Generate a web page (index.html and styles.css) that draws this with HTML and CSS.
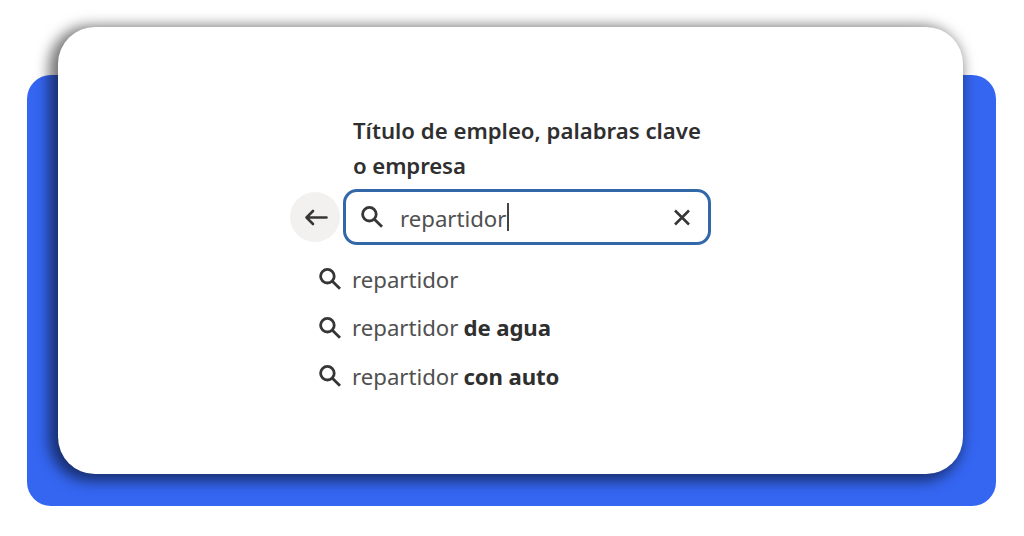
FILE: index.html
```html
<!DOCTYPE html>
<html lang="es">
<head>
  <meta charset="UTF-8">
  <meta name="viewport" content="width=device-width, initial-scale=1.0">
  <title>Buscar empleo</title>
  <link rel="stylesheet" href="styles.css">
</head>

<body>
  <svg class="sprite">
    <symbol id="icon-search" viewBox="0 0 22 22">
      <circle cx="8.4" cy="8.2" r="6.8"/>
      <path d="M13.1 13L21 20.8"/>
    </symbol>
  </svg>

  <div class="frame">
    <div class="card">
      <form class="search">
        <label class="search-label">
          <span>Título de empleo, palabras clave</span><br>
          <span class="label-end">o empresa</span>
        </label>

        <div class="search-row">
          <button class="button-back" type="button" aria-label="Volver">
            <svg class="icon-back" viewBox="0 0 24 18"><path d="M22.5 9.5H2.5M9 3L2.5 9.5L9 16"/></svg>
          </button>
          <div class="search-box">
            <svg class="icon-search"><use href="#icon-search"/></svg>
            <div class="search-input"><span class="typed">repartidor</span><span class="caret"></span></div>
            <svg class="icon-clear" viewBox="0 0 18 18"><path d="M2 2.5L16 16.5M16 2.5L2 16.5"/></svg>
          </div>
        </div>

        <ul class="suggestions">
          <li><svg class="icon-search"><use href="#icon-search"/></svg><span class="typed">repartidor</span></li>
          <li><svg class="icon-search"><use href="#icon-search"/></svg><span class="typed">repartidor</span><b>de agua</b></li>
          <li><svg class="icon-search"><use href="#icon-search"/></svg><span class="typed">repartidor</span><b>con auto</b></li>
        </ul>
      </form>
    </div>
  </div>
</body>
</html>
```

FILE: styles.css
```css
* {
  box-sizing: border-box;
}

body {
  margin: 0;
  height: 536px;
  padding: 75px 28px 30px 27px;
  overflow: hidden;
  background: #fff;
  color: #2f2f2f;
  font-family: "Noto Sans", sans-serif;
  font-size: 22.2px;
}

.sprite {
  display: none;
}

.frame {
  display: flex;
  height: 431px;
  background: #3566f2;
  border-radius: 24px;
}

/* the card rises above the blue frame */
.card {
  flex: 1;
  height: 447px;
  margin: -48px 33px 0 31px;
  padding: 86px 0 0 232px;
  background: #fff;
  border-radius: 37px;
  box-shadow: -5px 3px 14px 4px rgba(0, 0, 0, 0.55);
}

.search {
  width: 421px;
}

.search-label {
  display: block;
  padding-left: 63px;
  line-height: 35px;
  font-weight: 600;
  white-space: nowrap;
}

.label-end {
  letter-spacing: -0.1px;
}

.search-row {
  display: flex;
  align-items: center;
  gap: 3px;
  margin-top: 6px;
}

.button-back {
  display: flex;
  align-items: center;
  justify-content: center;
  width: 50px;
  height: 50px;
  padding: 0 0 0 1px;
  border: 0;
  border-radius: 50%;
  background: #f2f1f0;
}

svg {
  flex: none;
  fill: none;
  stroke: #363636;
  stroke-width: 2.8;
}

.icon-back {
  width: 24px;
  height: 18px;
  stroke-width: 2.6;
  stroke-linecap: round;
  stroke-linejoin: round;
}

.icon-search {
  width: 22px;
  height: 22px;
}

.icon-clear {
  width: 18px;
  height: 18px;
  stroke-width: 2.5;
}

.search-box {
  display: flex;
  align-items: center;
  flex: 1;
  height: 56px;
  padding: 0 17px 0 15px;
  border: 3px solid #3268a8;
  border-radius: 14px;
}

.search-input {
  display: flex;
  align-items: center;
  flex: 1;
  padding: 3px 0 0 17px;
}

.typed {
  color: #505050;
}

.caret {
  width: 2px;
  height: 28px;
  margin: -4px 0 0 1px;
  background: #444;
}

.suggestions {
  margin: 10px 0 0;
  padding: 0 0 0 29px;
  list-style: none;
}

.suggestions li {
  display: flex;
  align-items: center;
  height: 48.5px;
}

.suggestions .typed {
  margin-left: 11px;
}

.suggestions b {
  margin-left: 5px;
  letter-spacing: -0.1px;
}
```
